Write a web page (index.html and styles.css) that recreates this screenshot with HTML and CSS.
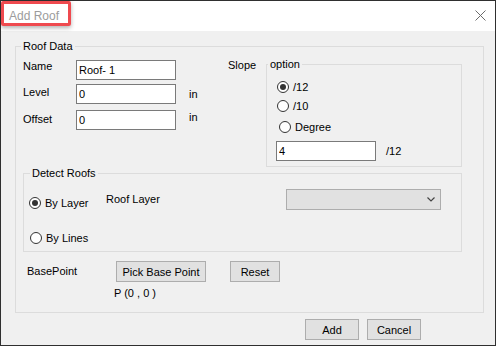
FILE: index.html
```html
<!DOCTYPE html>
<html lang="en">

<head>
    <meta charset="UTF-8">
    <meta name="viewport" content="width=device-width, initial-scale=1.0">
    <title>Add Roof</title>
    <link rel="stylesheet" href="styles.css">
</head>

<body>
    <div class="window">
        <div class="titlebar">
            <span class="title">Add Roof</span>
            <svg class="close" width="11" height="11" viewBox="0 0 11 11">
                <path d="M0.5 0.5 L10.5 10.5 M10.5 0.5 L0.5 10.5" stroke="#6b6b6b" stroke-width="1" fill="none" />
            </svg>
            <span class="highlight"></span>
        </div>

        <div class="content">
            <fieldset class="group roofData">
                <legend>Roof Data</legend>

                <div class="top">
                    <div class="fields">
                        <div class="row">
                            <label class="lbl">Name</label>
                            <input type="text" value="Roof- 1">
                        </div>
                        <div class="row rowLevel">
                            <label class="lbl lblLevel">Level</label>
                            <input type="text" value="0">
                            <span class="unit unitLevel">in</span>
                        </div>
                        <div class="row rowOffset">
                            <label class="lbl lblOffset">Offset</label>
                            <input type="text" value="0">
                            <span class="unit unitOffset">in</span>
                        </div>
                    </div>

                    <span class="slopeLabel">Slope</span>

                    <fieldset class="group option">
                        <legend>option</legend>
                        <div class="radio r12"><span class="circle checked"></span>/12</div>
                        <div class="radio r10"><span class="circle"></span>/10</div>
                        <div class="radio rDeg"><span class="circle"></span>Degree</div>
                        <div class="slopeRow">
                            <input type="text" value="4">
                            <span class="unit">/12</span>
                        </div>
                    </fieldset>
                </div>

                <fieldset class="group detect">
                    <legend>Detect Roofs</legend>
                    <div class="detectRow">
                        <div class="radio byLayer"><span class="circle checked"></span>By Layer</div>
                        <span class="roofLayer">Roof Layer</span>
                        <div class="dropdown">
                            <svg width="8" height="5" viewBox="0 0 8 5">
                                <path d="M0.5 0.5 L4 4 L7.5 0.5" stroke="#444" stroke-width="1.2" fill="none" />
                            </svg>
                        </div>
                    </div>
                    <div class="radio byLines"><span class="circle"></span>By Lines</div>
                </fieldset>

                <div class="basePoint">
                    <span class="bpLabel">BasePoint</span>
                    <button class="pick">Pick Base Point</button>
                    <button class="reset">Reset</button>
                </div>
                <div class="point">P (0 , 0 )</div>
            </fieldset>

            <div class="actions">
                <button>Add</button>
                <button>Cancel</button>
            </div>
        </div>
    </div>
</body>

</html>
```

FILE: styles.css
```css
* {
    box-sizing: border-box;
}
body {
    margin: 0;
    font-family: "Liberation Sans", Arial, sans-serif;
    font-size: 11px;
    line-height: 13px;
    color: #000;
}
.window {
    position: relative;
    width: 496px;
    height: 346px;
    border: 1px solid #2f2f2f;
    background: #f0f0f0;
}
.titlebar {
    display: flex;
    align-items: flex-start;
    height: 30px;
    padding-left: 8px;
    padding-top: 8px;
    background: #fff;
}
.title {
    font-size: 12px;
    line-height: 14px;
    color: #9c9c9c;
}
.close {
    margin-left: auto;
    margin-right: 9px;
    margin-top: 1px;
}
.highlight {
    position: absolute;
    left: 0;
    top: 0;
    width: 70px;
    height: 25px;
    border: 3px solid #ef4a4f;
    border-radius: 2px;
    box-shadow: 0 2px 4px rgba(0, 0, 0, 0.3);
}

/* group boxes */
.group {
    margin: 0;
    padding: 0;
    min-width: 0;
    border: 1px solid #dcdcdc;
}
.group legend {
    padding: 0 2px;
    line-height: 12px;
}
.roofData {
    width: 469px;
    height: 273px;
    margin: 9px 0 0 14px;
}
.roofData > legend {
    margin-left: 5px;
}

.top {
    display: flex;
    align-items: flex-start;
    padding-left: 7px;
}
.fields {
    width: 205px;
    padding-top: 8px;
}
.row {
    display: flex;
    align-items: flex-start;
}
.rowLevel {
    margin-top: 4px;
}
.rowOffset {
    margin-top: 6px;
}
.lbl {
    width: 53px;
}
.lblLevel {
    margin-top: 2px;
}
.lblOffset {
    margin-top: 3px;
}
.unit {
    margin-left: 13px;
}
.unitLevel {
    margin-top: 4px;
}
.unitOffset {
    margin-top: 1px;
}
input[type="text"] {
    width: 100px;
    height: 20px;
    margin: 0;
    padding: 0 2px;
    border: 1px solid #7a7a7a;
    background: #fff;
    font-family: inherit;
    font-size: 11px;
    color: #000;
    outline: none;
}

.slopeLabel {
    width: 38px;
    margin-top: 7px;
}
.option {
    width: 196px;
    height: 109px;
    margin-top: 6px;
}
.option legend {
    margin-left: 1px;
}

/* radio buttons */
.radio {
    display: flex;
    align-items: center;
    gap: 4px;
    height: 16px;
}
.circle {
    display: flex;
    justify-content: center;
    align-items: center;
    width: 12px;
    height: 12px;
    border: 1px solid #333;
    border-radius: 50%;
    background: #fff;
}
.circle.checked::after {
    content: "";
    width: 6px;
    height: 6px;
    border-radius: 50%;
    background: #333;
}
.r12 {
    margin-top: 9px;
    padding-left: 10px;
}
.r10 {
    margin-top: 3px;
    padding-left: 10px;
}
.rDeg {
    margin-top: 5px;
    padding-left: 12px;
}
.slopeRow {
    display: flex;
    align-items: center;
    margin-top: 6px;
    padding-left: 9px;
}
.slopeRow .unit {
    margin-left: 10px;
}

.detect {
    width: 439px;
    height: 85px;
    margin-left: 7px;
}
.detect legend {
    margin-left: 6px;
}
.detectRow {
    display: flex;
    align-items: flex-start;
    margin-top: 10px;
    padding-left: 5px;
}
.byLayer {
    width: 77px;
    margin-top: 6px;
}
.roofLayer {
    width: 180px;
    margin-top: 4px;
}
.dropdown {
    display: flex;
    justify-content: flex-end;
    align-items: center;
    width: 155px;
    height: 21px;
    padding-right: 5px;
    border: 1px solid #adadad;
    background: #e1e1e1;
}
.byLines {
    margin-top: 19px;
    padding-left: 6px;
}

/* buttons */
button {
    height: 21px;
    margin: 0;
    padding: 0;
    border: 1px solid #adadad;
    background: #e1e1e1;
    font-family: inherit;
    font-size: 11px;
    color: #000;
}
.basePoint {
    display: flex;
    align-items: center;
    margin-top: 9px;
    padding-left: 11px;
}
.bpLabel {
    width: 89px;
}
.pick {
    width: 90px;
    margin-right: 24px;
}
.reset {
    width: 50px;
}
.point {
    margin-top: 5px;
    padding-left: 98px;
}
.actions {
    display: flex;
    justify-content: flex-end;
    gap: 8px;
    margin-top: 6px;
    padding-right: 74px;
}
.actions button {
    width: 54px;
}
```
